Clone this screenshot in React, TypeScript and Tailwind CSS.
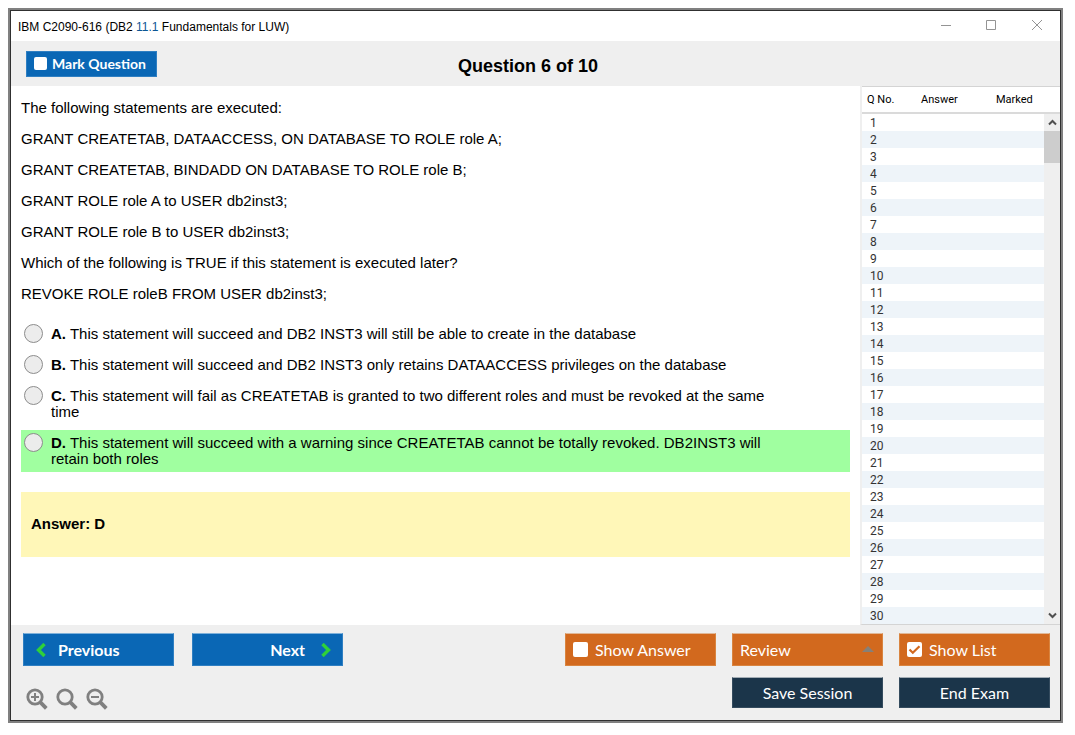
import clsx from 'clsx';
import { ReactNode } from 'react';

const statements = [
  'The following statements are executed:',
  'GRANT CREATETAB, DATAACCESS, ON DATABASE TO ROLE role A;',
  'GRANT CREATETAB, BINDADD ON DATABASE TO ROLE role B;',
  'GRANT ROLE role A to USER db2inst3;',
  'GRANT ROLE role B to USER db2inst3;',
  'Which of the following is TRUE if this statement is executed later?',
  'REVOKE ROLE roleB FROM USER db2inst3;',
];

const options = [
  {
    key: 'A',
    text: 'This statement will succeed and DB2 INST3 will still be able to create in the database',
  },
  {
    key: 'B',
    text: 'This statement will succeed and DB2 INST3 only retains DATAACCESS privileges on the database',
  },
  {
    key: 'C',
    text: 'This statement will fail as CREATETAB is granted to two different roles and must be revoked at the same time',
  },
  {
    key: 'D',
    text: 'This statement will succeed with a warning since CREATETAB cannot be totally revoked. DB2INST3 will retain both roles',
    correct: true,
  },
];

const questionNumbers = Array.from({ length: 30 }, (_, i) => i + 1);

const TitleBar = () => (
  <div className="flex h-[30px] items-center bg-white pl-[7px] pr-4">
    <h1 className="mr-auto pt-[2px] text-[12px] leading-4 text-black">
      IBM C2090-616 (DB2 <span className="text-[#0b5594]">11.1</span> Fundamentals for LUW)
    </h1>
    <div className="flex items-center gap-[31px] text-[#949494]">
      <button type="button" aria-label="Minimize">
        <svg className="block size-[14px]" viewBox="0 0 14 14" stroke="currentColor">
          <path d="M1 6.5H11" />
        </svg>
      </button>
      <button type="button" aria-label="Maximize">
        <svg className="block size-[14px]" viewBox="0 0 14 14" fill="none" stroke="currentColor">
          <path d="M1.5 1.5H10.5V10.5H1.5Z" />
        </svg>
      </button>
      <button type="button" aria-label="Close">
        <svg className="block size-[14px]" viewBox="0 0 14 14" fill="none" stroke="currentColor">
          <path d="M2 1L12 11M12 1L2 11" />
        </svg>
      </button>
    </div>
  </div>
);

interface CheckButtonProps {
  label: string;
  className?: string;
  boxClassName?: string;
  checked?: boolean;
}

const CheckButton = ({ label, className, boxClassName, checked }: CheckButtonProps) => (
  <label className={clsx('flex items-center border text-white', className)}>
    <span className="relative flex">
      <input
        type="checkbox"
        defaultChecked={checked}
        className={clsx('peer appearance-none rounded-[2px] bg-white', boxClassName)}
      />
      <svg
        className="pointer-events-none absolute inset-0 hidden size-full peer-checked:block"
        viewBox="0 0 15 15"
        fill="none"
        stroke="#d2691e"
        strokeWidth="2.2"
      >
        <path d="M2.5 7.5L5.8 10.8L12.5 4.3" />
      </svg>
    </span>
    {label}
  </label>
);

const ZoomButton = ({ label, children }: { label: string; children?: ReactNode }) => (
  <button type="button" aria-label={label} className="text-[#808080]">
    <svg
      className="block size-[22px]"
      viewBox="0 0 22 22"
      fill="none"
      stroke="currentColor"
      strokeWidth="2.8"
    >
      <circle cx="9" cy="9" r="7.2" />
      <path d="M14.2 14.2L20.3 20.3" strokeWidth="3.8" />
      {children}
    </svg>
  </button>
);

const QuestionList = () => (
  <aside className="flex w-[200px] shrink-0 border-b border-l-2 border-b-[#d4d4d4] border-l-[#efefef] bg-white">
    <table className="grow border-separate border-spacing-0 text-left font-[Roboto,sans-serif] text-[12px] text-[#333]">
      <thead className="text-[11px] text-black">
        <tr>
          <th className="h-7 w-[59px] border-b-2 border-t border-b-[#dadada] border-t-[#d4d4d4] pl-[5px] pt-[2px] font-normal">
            Q No.
          </th>
          <th className="h-7 w-[75px] border-b-2 border-t border-b-[#dadada] border-t-[#d4d4d4] pt-[2px] font-normal">
            Answer
          </th>
          <th className="h-7 border-b-2 border-t border-b-[#dadada] border-t-[#d4d4d4] pt-[2px] font-normal">
            Marked
          </th>
        </tr>
      </thead>
      <tbody>
        {questionNumbers.map((n) => (
          <tr key={n} className="h-[17px] even:bg-[#eef4f9]">
            <td className="pl-2 pt-[2px] leading-[15px]">{n}</td>
            <td />
            <td />
          </tr>
        ))}
      </tbody>
    </table>
    <div className="flex w-4 flex-col">
      <div className="h-7 border-b-2 border-t border-b-[#dadada] border-t-[#d4d4d4]" />
      <div className="flex grow flex-col bg-[#efefef]">
        <button type="button" aria-label="Scroll up" className="flex h-[17px] items-center justify-center">
          <svg className="size-[9px]" viewBox="0 0 9 9" fill="none" stroke="#505050" strokeWidth="2">
            <path d="M1 6.5L4.5 3L8 6.5" />
          </svg>
        </button>
        <div className="h-8 bg-[#cdcdcd]" />
        <button
          type="button"
          aria-label="Scroll down"
          className="mt-auto flex h-[17px] items-center justify-center"
        >
          <svg className="size-[9px]" viewBox="0 0 9 9" fill="none" stroke="#505050" strokeWidth="2">
            <path d="M1 2.5L4.5 6L8 2.5" />
          </svg>
        </button>
      </div>
    </div>
  </aside>
);

const QuestionPanel = () => (
  <main className="min-w-0 grow bg-white px-[10px] pt-[14px] text-[15px] leading-4 text-black">
    <div className="flex flex-col gap-[15px]">
      {statements.map((line) => (
        <p key={line}>{line}</p>
      ))}
    </div>
    <div className="mt-[19px] flex flex-col gap-[5px]">
      {options.map(({ key, text, correct }) => (
        <label
          key={key}
          className={clsx('flex items-start gap-2 py-[5px] pl-[3px] pr-20', correct && 'bg-[#a0ffa0]')}
        >
          <input
            type="radio"
            name="answer"
            value={key}
            className="-my-[2px] size-[19px] shrink-0 appearance-none rounded-full border border-[#8c8c8c] bg-[#ececec] checked:bg-[#8c8c8c]"
          />
          <span>
            <b>{key}.</b> {text}
          </span>
        </label>
      ))}
    </div>
    <div className="mt-5 bg-[#fff7b8] px-[10px] pb-[25px] pt-6 font-bold">Answer: D</div>
  </main>
);

const Footer = () => (
  <footer className="flex justify-between bg-[#efefef] pb-[10px] pl-3 pr-[10px] pt-2 font-[Lato,sans-serif]">
    <div className="flex flex-col">
      <div className="flex gap-[18px] text-[16px] font-bold text-white">
        <button
          type="button"
          className="flex h-[33px] w-[151px] items-center gap-[9px] border border-[#2f7fc2] border-t-[#7fb1da] bg-[#0a67b5] pl-[11px]"
        >
          <svg className="size-[14px]" viewBox="0 0 14 14" fill="none" stroke="#2fd03a" strokeWidth="3.4">
            <path d="M9.5 1L3.5 7L9.5 13" />
          </svg>
          Previous
        </button>
        <button
          type="button"
          className="flex h-[33px] w-[151px] items-center justify-end gap-[13px] border border-[#2f7fc2] border-t-[#7fb1da] bg-[#0a67b5] pr-[10px]"
        >
          Next
          <svg className="size-[14px]" viewBox="0 0 14 14" fill="none" stroke="#2fd03a" strokeWidth="3.4">
            <path d="M4.5 1L10.5 7L4.5 13" />
          </svg>
        </button>
      </div>
      <div className="mt-[22px] flex gap-2 pl-[3px]">
        <ZoomButton label="Zoom in">
          <path d="M9 5V13M5 9H13" strokeWidth="2" />
        </ZoomButton>
        <ZoomButton label="Reset zoom" />
        <ZoomButton label="Zoom out">
          <path d="M5 9H13" strokeWidth="2" />
        </ZoomButton>
      </div>
    </div>
    <div className="grid grid-cols-[repeat(3,151px)] content-start gap-x-4 gap-y-[11px] text-[16px] text-white">
      <CheckButton
        label="Show Answer"
        className="h-[33px] gap-[7px] border-[#d9843f] border-t-[#e0b898] bg-[#d2691e] pl-[7px]"
        boxClassName="size-[15px]"
      />
      <div className="relative">
        <select
          aria-label="Review"
          className="h-[33px] w-full appearance-none border border-[#d9843f] border-t-[#e0b898] bg-[#d2691e] pl-[7px]"
        >
          <option>Review</option>
        </select>
        <svg className="pointer-events-none absolute right-[9px] top-[13px] h-[6px] w-3" viewBox="0 0 12 6">
          <path d="M0 6L6 0L12 6Z" fill="#868078" />
        </svg>
      </div>
      <CheckButton
        label="Show List"
        className="h-[33px] gap-[7px] border-[#d9843f] border-t-[#e0b898] bg-[#d2691e] pl-[7px]"
        boxClassName="size-[15px]"
        checked
      />
      <button
        type="button"
        className="col-start-2 h-[31px] border border-[#344b5e] border-t-[#a3adb5] bg-[#1b354a]"
      >
        Save Session
      </button>
      <button type="button" className="h-[31px] border border-[#344b5e] border-t-[#a3adb5] bg-[#1b354a]">
        End Exam
      </button>
    </div>
  </footer>
);

export default function App() {
  return (
    <div className="bg-white pb-3 pl-2 pr-3 pt-2 font-['Liberation_Sans',Arial,sans-serif]">
      <div className="border-2 border-[#808080]">
        <div className="border border-[#303030]">
          <TitleBar />
          <header className="grid h-[45px] grid-cols-[1fr_auto_1fr] items-center bg-[#efefef] pl-[15px] pr-[30px]">
            <CheckButton
              label="Mark Question"
              className="h-[26px] w-[131px] gap-[5px] justify-self-start border-[#2f7fc2] bg-[#0a67b5] pl-[7px] font-[Lato,sans-serif] text-[14px] font-bold"
              boxClassName="size-[13px]"
            />
            <h2 className="pt-1 text-[18px] font-bold leading-6 text-black">Question 6 of 10</h2>
          </header>
          <div className="flex">
            <QuestionPanel />
            <QuestionList />
          </div>
          <Footer />
        </div>
      </div>
    </div>
  );
}
